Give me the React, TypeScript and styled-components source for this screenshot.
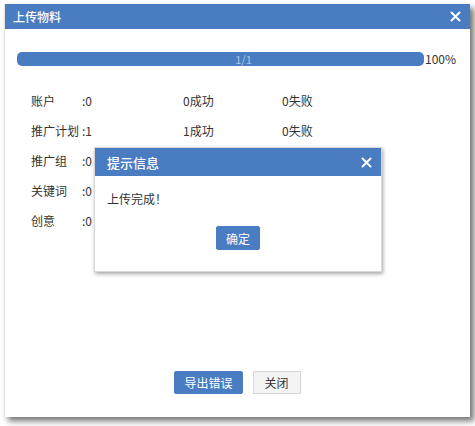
import React from 'react';
import styled, { createGlobalStyle } from 'styled-components';

const BLUE = '#4a7cc2';

const GlobalStyle = createGlobalStyle`
  html, body {
    margin: 0;
    padding: 0;
    background: #fff;
  }
  body {
    font-family: "Noto Sans CJK SC", "Liberation Sans", sans-serif;
    font-size: 12px;
    color: #333;
  }
`;

const Page = styled.div`
  width: 475px;
  height: 426px;
  padding: 4px 0 0 4px;
  box-sizing: border-box;
`;

const Dialog = styled.div`
  position: relative;
  width: 466px;
  height: 413px;
  background: #fff;
  border-left: 1px solid #e4e4e4;
  box-sizing: border-box;
  box-shadow: 4px 4px 6px rgba(0, 0, 0, 0.55);
  display: flex;
  flex-direction: column;
`;

const TitleBar = styled.div<{ $h: number; $pad: number }>`
  height: ${p => p.$h}px;
  background: ${BLUE};
  color: #fff;
  display: flex;
  align-items: center;
  justify-content: space-between;
  padding: 0 9px 0 ${p => p.$pad}px;
  flex-shrink: 0;
`;

const Title = styled.span<{ $size: number }>`
  font-size: ${p => p.$size}px;
  font-weight: 500;
`;

const CloseIcon = () => (
  <svg width="11" height="11" viewBox="0 0 11 11">
    <path d="M1.5 1.5 L9.5 9.5 M9.5 1.5 L1.5 9.5" stroke="#fff" strokeWidth="2" strokeLinecap="round" />
  </svg>
);

const Body = styled.div`
  flex: 1;
  padding: 21px 0 0 12px;
  display: flex;
  flex-direction: column;
`;

const ProgressRow = styled.div`
  display: flex;
  align-items: center;
`;

const Track = styled.div`
  width: 407px;
  height: 14px;
  border-radius: 5px;
  background: ${BLUE};
  display: flex;
  align-items: center;
  justify-content: center;
  padding-left: 46px;
  box-sizing: border-box;
  overflow: hidden;
`;

const ProgressText = styled.span`
  color: #aac4e8;
  font-size: 11px;
  line-height: 14px;
`;

const Percent = styled.span`
  font-size: 12px;
  color: #333;
  margin-left: 1px;
`;

const Stats = styled.div`
  margin-top: 19px;
  padding-left: 14px;
  display: grid;
  grid-template-columns: 51px 101px 99px auto;
  grid-auto-rows: 29.8px;
  align-items: center;
`;

const Cell = styled.span`
  white-space: nowrap;
  font-size: 12px;
`;

const Footer = styled.div`
  margin-top: auto;
  margin-bottom: 23px;
  display: flex;
  justify-content: center;
  gap: 10px;
`;

const Button = styled.button<{ $primary?: boolean; $h?: number }>`
  height: ${p => p.$h ?? 23}px;
  padding: 0 ${p => (p.$primary ? 9 : 11)}px;
  font-family: inherit;
  font-size: 12px;
  border-radius: ${p => (p.$primary ? 2 : 0)}px;
  border: 1px solid ${p => (p.$primary ? BLUE : '#d6d6d6')};
  background: ${p => (p.$primary ? BLUE : '#f4f4f4')};
  color: ${p => (p.$primary ? '#fff' : '#333')};
  cursor: pointer;
`;

const Popup = styled.div`
  position: absolute;
  left: 89px;
  top: 143px;
  width: 288px;
  height: 125px;
  background: #fff;
  border: 1px solid #d8d8d8;
  box-sizing: border-box;
  box-shadow: 1px 2px 4px rgba(0, 0, 0, 0.35);
  display: flex;
  flex-direction: column;
`;

const PopupBody = styled.div`
  flex: 1;
  padding: 14px 12px 0 12px;
  display: flex;
  flex-direction: column;
`;

const Message = styled.div`
  font-size: 12px;
`;

const PopupActions = styled.div`
  margin-top: 19px;
  display: flex;
  justify-content: center;
`;

const rows = [
  { name: '账户', count: 0, ok: 0, fail: 0 },
  { name: '推广计划', count: 1, ok: 1, fail: 0 },
  { name: '推广组', count: 0, ok: 0, fail: 0 },
  { name: '关键词', count: 0, ok: 0, fail: 0 },
  { name: '创意', count: 0, ok: 0, fail: 0 },
];

export default function App() {
  return (
    <>
      <GlobalStyle />
      <Page>
        <Dialog>
          <TitleBar $h={25} $pad={8}>
            <Title $size={12}>上传物料</Title>
            <CloseIcon />
          </TitleBar>
          <Body>
            <ProgressRow>
              <Track>
                <ProgressText>1/1</ProgressText>
              </Track>
              <Percent>100%</Percent>
            </ProgressRow>
            <Stats>
              {rows.map(r => (
                <React.Fragment key={r.name}>
                  <Cell>{r.name}</Cell>
                  <Cell>:{r.count}</Cell>
                  <Cell>{r.ok}成功</Cell>
                  <Cell>{r.fail}失败</Cell>
                </React.Fragment>
              ))}
            </Stats>
          </Body>
          <Footer>
            <Button $primary>导出错误</Button>
            <Button>关闭</Button>
          </Footer>
          <Popup>
            <TitleBar $h={28} $pad={12}>
              <Title $size={13}>提示信息</Title>
              <CloseIcon />
            </TitleBar>
            <PopupBody>
              <Message>上传完成！</Message>
              <PopupActions>
                <Button $primary $h={24}>确定</Button>
              </PopupActions>
            </PopupBody>
          </Popup>
        </Dialog>
      </Page>
    </>
  );
}
